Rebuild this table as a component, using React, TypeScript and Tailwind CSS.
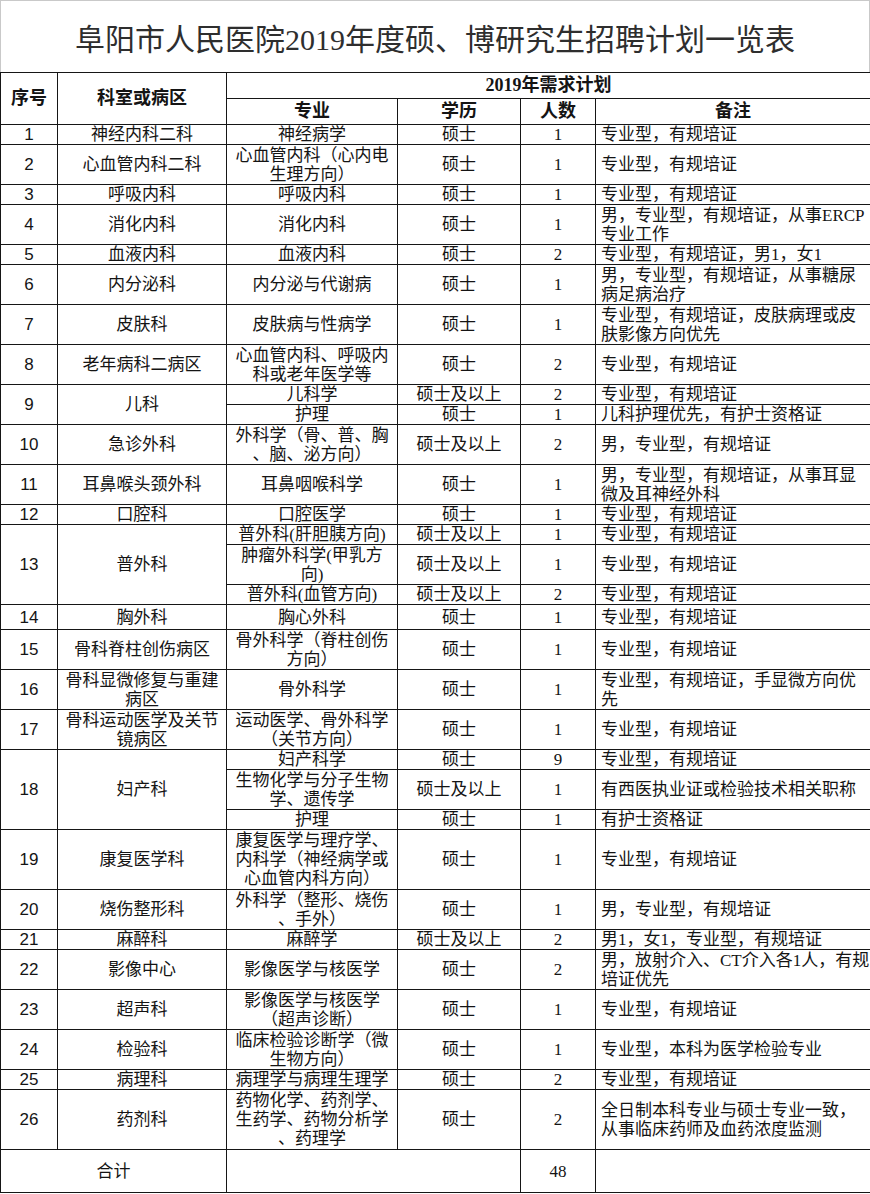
import React from "react";

type Row = {
  no?: string;
  span?: number;
  dept?: string[];
  major: string[];
  edu: string;
  num: string;
  note: string[];
  h: number;
};

const rows: Row[] = [
  { no: "1", dept: ["神经内科二科"], major: ["神经病学"], edu: "硕士", num: "1", note: ["专业型，有规培证"], h: 20 },
  { no: "2", dept: ["心血管内科二科"], major: ["心血管内科（心内电", "生理方向）"], edu: "硕士", num: "1", note: ["专业型，有规培证"], h: 40 },
  { no: "3", dept: ["呼吸内科"], major: ["呼吸内科"], edu: "硕士", num: "1", note: ["专业型，有规培证"], h: 20 },
  { no: "4", dept: ["消化内科"], major: ["消化内科"], edu: "硕士", num: "1", note: ["男，专业型，有规培证，从事ERCP", "专业工作"], h: 40 },
  { no: "5", dept: ["血液内科"], major: ["血液内科"], edu: "硕士", num: "2", note: ["专业型，有规培证，男1，女1"], h: 20 },
  { no: "6", dept: ["内分泌科"], major: ["内分泌与代谢病"], edu: "硕士", num: "1", note: ["男，专业型，有规培证，从事糖尿", "病足病治疗"], h: 40 },
  { no: "7", dept: ["皮肤科"], major: ["皮肤病与性病学"], edu: "硕士", num: "1", note: ["专业型，有规培证，皮肤病理或皮", "肤影像方向优先"], h: 40 },
  { no: "8", dept: ["老年病科二病区"], major: ["心血管内科、呼吸内", "科或老年医学等"], edu: "硕士", num: "2", note: ["专业型，有规培证"], h: 40 },
  { no: "9", span: 2, dept: ["儿科"], major: ["儿科学"], edu: "硕士及以上", num: "2", note: ["专业型，有规培证"], h: 20 },
  { major: ["护理"], edu: "硕士", num: "1", note: ["儿科护理优先，有护士资格证"], h: 20 },
  { no: "10", dept: ["急诊外科"], major: ["外科学（骨、普、胸", "、脑、泌方向）"], edu: "硕士及以上", num: "2", note: ["男，专业型，有规培证"], h: 40 },
  { no: "11", dept: ["耳鼻喉头颈外科"], major: ["耳鼻咽喉科学"], edu: "硕士", num: "1", note: ["男，专业型，有规培证，从事耳显", "微及耳神经外科"], h: 40 },
  { no: "12", dept: ["口腔科"], major: ["口腔医学"], edu: "硕士", num: "1", note: ["专业型，有规培证"], h: 20 },
  { no: "13", span: 3, dept: ["普外科"], major: ["普外科(肝胆胰方向)"], edu: "硕士及以上", num: "1", note: ["专业型，有规培证"], h: 20 },
  { major: ["肿瘤外科学(甲乳方", "向)"], edu: "硕士及以上", num: "1", note: ["专业型，有规培证"], h: 40 },
  { major: ["普外科(血管方向)"], edu: "硕士及以上", num: "2", note: ["专业型，有规培证"], h: 20 },
  { no: "14", dept: ["胸外科"], major: ["胸心外科"], edu: "硕士", num: "1", note: ["专业型，有规培证"], h: 25 },
  { no: "15", dept: ["骨科脊柱创伤病区"], major: ["骨外科学（脊柱创伤", "方向）"], edu: "硕士", num: "1", note: ["专业型，有规培证"], h: 40 },
  { no: "16", dept: ["骨科显微修复与重建", "病区"], major: ["骨外科学"], edu: "硕士", num: "1", note: ["专业型，有规培证，手显微方向优", "先"], h: 40 },
  { no: "17", dept: ["骨科运动医学及关节", "镜病区"], major: ["运动医学、骨外科学", "（关节方向）"], edu: "硕士", num: "1", note: ["专业型，有规培证"], h: 40 },
  { no: "18", span: 3, dept: ["妇产科"], major: ["妇产科学"], edu: "硕士", num: "9", note: ["专业型，有规培证"], h: 20 },
  { major: ["生物化学与分子生物", "学、遗传学"], edu: "硕士及以上", num: "1", note: ["有西医执业证或检验技术相关职称"], h: 40 },
  { major: ["护理"], edu: "硕士", num: "1", note: ["有护士资格证"], h: 20 },
  { no: "19", dept: ["康复医学科"], major: ["康复医学与理疗学、", "内科学（神经病学或", "心血管内科方向）"], edu: "硕士", num: "1", note: ["专业型，有规培证"], h: 60 },
  { no: "20", dept: ["烧伤整形科"], major: ["外科学（整形、烧伤", "、手外）"], edu: "硕士", num: "1", note: ["男，专业型，有规培证"], h: 40 },
  { no: "21", dept: ["麻醉科"], major: ["麻醉学"], edu: "硕士及以上", num: "2", note: ["男1，女1，专业型，有规培证"], h: 20 },
  { no: "22", dept: ["影像中心"], major: ["影像医学与核医学"], edu: "硕士", num: "2", note: ["男，放射介入、CT介入各1人，有规", "培证优先"], h: 40 },
  { no: "23", dept: ["超声科"], major: ["影像医学与核医学", "（超声诊断）"], edu: "硕士", num: "1", note: ["专业型，有规培证"], h: 40 },
  { no: "24", dept: ["检验科"], major: ["临床检验诊断学（微", "生物方向）"], edu: "硕士", num: "1", note: ["专业型，本科为医学检验专业"], h: 40 },
  { no: "25", dept: ["病理科"], major: ["病理学与病理生理学"], edu: "硕士", num: "2", note: ["专业型，有规培证"], h: 20 },
  { no: "26", dept: ["药剂科"], major: ["药物化学、药剂学、", "生药学、药物分析学", "、药理学"], edu: "硕士", num: "2", note: ["全日制本科专业与硕士专业一致，", "从事临床药师及血药浓度监测"], h: 60 },
];

const heightClass: Record<number, string> = {
  20: "h-[20px]",
  25: "h-[25px]",
  40: "h-[40px]",
  60: "h-[60px]",
};

const cell =
  "border border-[#161616] p-0 align-middle leading-[19px] whitespace-nowrap overflow-hidden text-[17px] text-[#141414]";
const serif = "font-['Liberation_Serif','Noto_Sans_CJK_SC',serif]";
const sans = "font-['Liberation_Sans','Noto_Sans_CJK_SC',sans-serif]";

function Lines({ lines }: { lines: string[] }) {
  return (
    <>
      {lines.map((l, i) => (
        <div key={i}>{l}</div>
      ))}
    </>
  );
}

export default function App() {
  return (
    <div className="w-[870px] bg-white">
      <div className="h-[72px] border-t border-x border-[#c9c9c9] flex items-center justify-center pt-[7px]">
        <h1 className="text-[30px] leading-[34px] text-[#2e2e2e] font-normal font-['Liberation_Serif','Noto_Sans_CJK_SC',serif]">
          阜阳市人民医院2019年度硕、博研究生招聘计划一览表
        </h1>
      </div>
      <table className="w-[870px] table-fixed border-collapse">
        <colgroup>
          <col className="w-[57px]" />
          <col className="w-[169px]" />
          <col className="w-[171px]" />
          <col className="w-[123px]" />
          <col className="w-[75px]" />
          <col className="w-[275px]" />
        </colgroup>
        <thead>
          <tr className="h-[26px]">
            <th rowSpan={2} className={`${cell} ${serif} text-center font-bold text-[18px]`}>
              序号
            </th>
            <th rowSpan={2} className={`${cell} ${serif} text-center font-bold text-[18px]`}>
              科室或病区
            </th>
            <th colSpan={4} className={`${cell} ${serif} text-center font-bold text-[18px]`}>
              2019年需求计划
            </th>
          </tr>
          <tr className="h-[26px]">
            <th className={`${cell} ${serif} text-center font-bold text-[18px]`}>专业</th>
            <th className={`${cell} ${serif} text-center font-bold text-[18px]`}>学历</th>
            <th className={`${cell} ${serif} text-center font-bold text-[18px]`}>人数</th>
            <th className={`${cell} ${serif} text-center font-bold text-[18px]`}>备注</th>
          </tr>
        </thead>
        <tbody>
          {rows.map((r, i) => (
            <tr key={i} className={heightClass[r.h]}>
              {r.no !== undefined && (
                <td rowSpan={r.span ?? 1} className={`${cell} ${sans} text-center text-[16px]`}>
                  {r.no}
                </td>
              )}
              {r.dept !== undefined && (
                <td rowSpan={r.span ?? 1} className={`${cell} ${serif} text-center`}>
                  <Lines lines={r.dept} />
                </td>
              )}
              <td className={`${cell} ${serif} text-center`}>
                <Lines lines={r.major} />
              </td>
              <td className={`${cell} ${serif} text-center`}>{r.edu}</td>
              <td className={`${cell} ${serif} text-center`}>{r.num}</td>
              <td className={`${cell} ${serif} text-left pl-[5px]`}>
                <Lines lines={r.note} />
              </td>
            </tr>
          ))}
          <tr className="h-[43px]">
            <td colSpan={2} className={`${cell} ${serif} text-center`}>
              合计
            </td>
            <td colSpan={2} className={`${cell} ${serif}`}></td>
            <td className={`${cell} ${serif} text-center`}>48</td>
            <td className={`${cell} ${serif}`}></td>
          </tr>
        </tbody>
      </table>
    </div>
  );
}
